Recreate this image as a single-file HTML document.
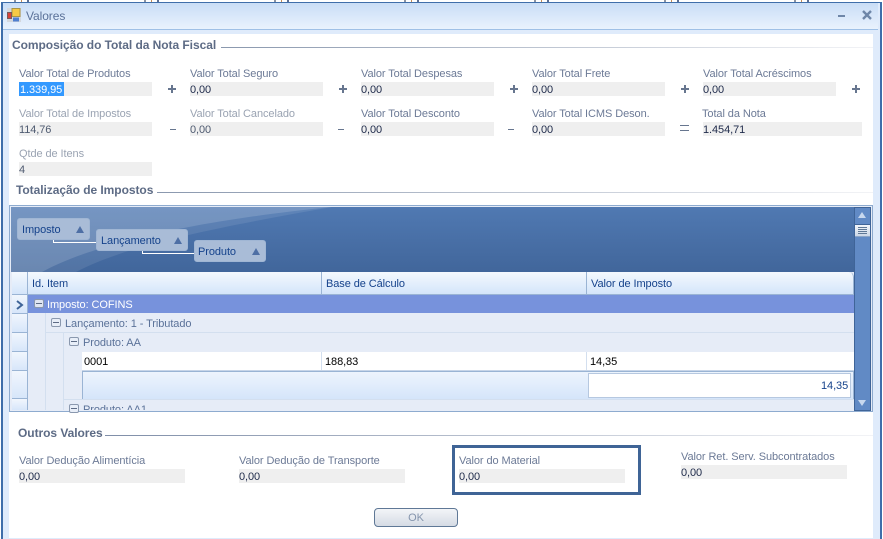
<!DOCTYPE html>
<html><head><meta charset="utf-8"><style>
html,body{margin:0;padding:0}
body{width:883px;height:538px;overflow:hidden;position:relative;background:#fff;font-family:"Liberation Sans",sans-serif;font-size:11px;letter-spacing:-.08px;color:#15428b}
div,span{position:absolute;white-space:nowrap}
.t{line-height:14px;height:14px}
.l{color:#6c7a96;line-height:16px}
.m{color:#9aa3b2;line-height:16px}
.b{background:#efefef;height:14px}
.v{color:#1e2a4a;line-height:16px;height:14px}
.g{font-weight:bold;color:#5d6b85;line-height:14px;height:14px;font-size:12px;letter-spacing:-.05px}
.h{top:272px;height:22px;background:linear-gradient(#f4f9fe,#d4e5fa);border-bottom:1px solid #9ab4d4;border-right:1px solid #9ab4d4;line-height:24px}
.p{color:#5b7299;line-height:14px;height:14px}
.ex{width:8px;height:7px;border:1px solid #8a98ae;background:#e8eef8;border-radius:2px}
.ex:after{content:"";position:absolute;left:1px;right:1px;top:3px;height:1px;background:#5d6b85}
.bt{background:#a9bcd7;border:1px solid #a0b6d4;border-radius:3px;height:20px;line-height:22px;color:#15428b}
.tri{width:0;height:0;border-left:4px solid transparent;border-right:4px solid transparent;border-bottom:7px solid #4e6fa5}
.ind{left:12px;width:15px;background:linear-gradient(#f1f6fd,#d7e6fa);border-bottom:1px solid #9ab4d4;border-right:1px solid #9ab4d4}
.pl,.mi,.eq{background:#67768f}
</style></head><body>

<!-- background strip -->
<div style="left:0;top:0;width:883px;height:2px;background:repeating-linear-gradient(90deg,#fff 0 14px,#8b93a3 14px 16px,#fff 16px 21px,#c28a55 21px 22px,#fff 22px 27px,#5c6d90 27px 29px,#fff 29px 130px)"></div>
<div style="left:881px;top:0;width:2px;height:538px;background:#fff"></div>

<!-- window -->
<div style="left:1px;top:2px;width:877px;height:536px;border:1px solid #3f6eaa;border-bottom:0;border-left-width:2px;border-right-width:2px;background:#dfebfb"></div>
<div style="left:3px;top:3px;width:875px;height:26px;background:linear-gradient(#c9ddf6,#e9f2fd)"></div>
<div style="left:3px;top:29px;width:875px;height:1px;background:#9fc0e6"></div>

<!-- title icon -->
<svg style="position:absolute;left:7px;top:8px" width="14" height="14" viewBox="0 0 14 14">
<rect x="0" y="0" width="14" height="14" fill="#d4d8de"/>
<rect x="5" y="0.5" width="8" height="8" fill="#f6c945" stroke="#a89448"/>
<rect x="0.5" y="4.5" width="4" height="6" fill="#d8423a" stroke="#7a5a5a"/>
<rect x="6" y="9.5" width="6" height="4" fill="#4f7fd0"/>
</svg>
<div class="t" style="left:26px;top:9px;color:#5a7199;font-size:12px">Valores</div>
<div style="left:838px;top:15px;width:7px;height:2px;background:#6e86a8"></div>
<svg style="position:absolute;left:862px;top:10px" width="10" height="10" viewBox="0 0 10 10"><path d="M1 1L9 9M9 1L1 9" stroke="#6e86a8" stroke-width="2.4"/></svg>

<!-- white client -->
<div style="left:9px;top:34px;width:864px;height:504px;background:#fff"></div>

<!-- group 1 -->
<div class="g" style="left:12px;top:38px">Composição do Total da Nota Fiscal</div>
<div style="left:221px;top:47px;width:652px;height:1px;background:linear-gradient(90deg,#8a98ae,#f2f3f6)"></div>

<div class="t l" style="left:19px;top:66px">Valor Total de Produtos</div>
<div class="b" style="left:19px;top:82px;width:133px"></div>
<div style="left:19px;top:82px;width:45px;height:14px;background:#3399ff"></div>
<div class="v" style="left:20px;top:82px;color:#fff">1.339,95</div>
<div class="pl" style="left:168px;top:88px;width:8px;height:1px;box-shadow:0 1px 0 #67768f"></div><div class="pl" style="left:171px;top:85px;width:2px;height:8px"></div>

<div class="t l" style="left:190px;top:66px">Valor Total Seguro</div>
<div class="b" style="left:190px;top:82px;width:133px"></div>
<div class="v" style="left:190px;top:82px">0,00</div>
<div class="pl" style="left:339px;top:88px;width:8px;height:1px;box-shadow:0 1px 0 #67768f"></div><div class="pl" style="left:342px;top:85px;width:2px;height:8px"></div>

<div class="t l" style="left:361px;top:66px">Valor Total Despesas</div>
<div class="b" style="left:361px;top:82px;width:133px"></div>
<div class="v" style="left:361px;top:82px">0,00</div>
<div class="pl" style="left:510px;top:88px;width:8px;height:1px;box-shadow:0 1px 0 #67768f"></div><div class="pl" style="left:513px;top:85px;width:2px;height:8px"></div>

<div class="t l" style="left:532px;top:66px">Valor Total Frete</div>
<div class="b" style="left:532px;top:82px;width:133px"></div>
<div class="v" style="left:532px;top:82px">0,00</div>
<div class="pl" style="left:681px;top:88px;width:8px;height:1px;box-shadow:0 1px 0 #67768f"></div><div class="pl" style="left:684px;top:85px;width:2px;height:8px"></div>

<div class="t l" style="left:703px;top:66px">Valor Total Acréscimos</div>
<div class="b" style="left:703px;top:82px;width:133px"></div>
<div class="v" style="left:703px;top:82px">0,00</div>
<div class="pl" style="left:852px;top:88px;width:8px;height:1px;box-shadow:0 1px 0 #67768f"></div><div class="pl" style="left:855px;top:85px;width:2px;height:8px"></div>

<div class="t m" style="left:19px;top:106px">Valor Total de Impostos</div>
<div class="b" style="left:19px;top:122px;width:133px"></div>
<div class="v" style="left:19px;top:122px;color:#4e5a70">114,76</div>
<div class="mi" style="left:170px;top:129px;width:6px;height:1px"></div>

<div class="t m" style="left:190px;top:106px">Valor Total Cancelado</div>
<div class="b" style="left:190px;top:122px;width:133px"></div>
<div class="v" style="left:190px;top:122px;color:#4e5a70">0,00</div>
<div class="mi" style="left:338px;top:129px;width:6px;height:1px"></div>

<div class="t l" style="left:361px;top:106px">Valor Total Desconto</div>
<div class="b" style="left:361px;top:122px;width:133px"></div>
<div class="v" style="left:361px;top:122px">0,00</div>
<div class="mi" style="left:508px;top:129px;width:6px;height:1px"></div>

<div class="t l" style="left:532px;top:106px">Valor Total ICMS Deson.</div>
<div class="b" style="left:532px;top:122px;width:133px"></div>
<div class="v" style="left:532px;top:122px">0,00</div>
<div class="eq" style="left:680px;top:125px;width:9px;height:1px"></div>
<div class="eq" style="left:680px;top:130px;width:9px;height:1px"></div>

<div class="t l" style="left:702px;top:106px">Total da Nota</div>
<div class="b" style="left:703px;top:122px;width:159px"></div>
<div class="v" style="left:703px;top:122px">1.454,71</div>

<div class="t m" style="left:19px;top:146px">Qtde de Itens</div>
<div class="b" style="left:19px;top:162px;width:133px"></div>
<div class="v" style="left:19px;top:162px;color:#4e5a70">4</div>

<!-- group 2 -->
<div class="g" style="left:16px;top:183px">Totalização de Impostos</div>
<div style="left:157px;top:192px;width:716px;height:1px;background:linear-gradient(90deg,#8a98ae,#f2f3f6)"></div>

<!-- grid -->
<div style="left:9px;top:205px;width:862px;height:205px;border:1px solid #8eabcf;background:#e6ecf7"></div>
<svg style="position:absolute;left:11px;top:207px" width="844" height="65" viewBox="0 0 844 65">
<defs><linearGradient id="a" x1="0" y1="0" x2="0" y2="1"><stop offset="0" stop-color="#5079b2"/><stop offset="1" stop-color="#41669b"/></linearGradient></defs>
<rect width="844" height="65" fill="url(#a)"/>
<path d="M0 0H321C180 14 80 38 31 65H0Z" fill="#fff" opacity=".22"/>
<path d="M31 65C80 38 180 14 321 0C220 18 120 36 65 65Z" fill="#fff" opacity=".09"/>
</svg>

<div class="bt" style="left:17px;top:218px;width:71px"><span style="left:4px;top:0">Imposto</span><div class="tri" style="left:58px;top:7px"></div></div>
<div style="left:53px;top:240px;width:43px;height:2px;border:1px solid #fff;border-top:0;border-right:0"></div>
<div class="bt" style="left:96px;top:229px;width:90px"><span style="left:4px;top:0">Lançamento</span><div class="tri" style="left:77px;top:7px"></div></div>
<div style="left:142px;top:251px;width:52px;height:2px;border:1px solid #fff;border-top:0;border-right:0"></div>
<div class="bt" style="left:194px;top:240px;width:70px"><span style="left:3px;top:0">Produto</span><div class="tri" style="left:57px;top:7px"></div></div>

<!-- header -->
<div class="h" style="left:12px;width:15px"></div>
<div class="h" style="left:28px;width:293px"><span style="left:4px;top:0">Id. Item</span></div>
<div class="h" style="left:322px;width:264px"><span style="left:4px;top:0">Base de Cálculo</span></div>
<div class="h" style="left:587px;width:266px;border-top-right-radius:5px"><span style="left:4px;top:0">Valor de Imposto</span></div>

<!-- left indicator -->
<div class="ind" style="top:295px;height:18px"></div>
<svg style="position:absolute;left:16px;top:300px" width="8" height="10" viewBox="0 0 8 10"><path d="M1 1L6 5L1 9" fill="none" stroke="#3f6498" stroke-width="2"/></svg>
<div class="ind" style="top:314px;height:18px"></div>
<div class="ind" style="top:333px;height:18px"></div>
<div class="ind" style="top:352px;height:18px"></div>
<div class="ind" style="top:371px;height:27px"></div>
<div class="ind" style="top:399px;height:11px;border-bottom:0"></div>

<!-- selected row -->
<div style="left:28px;top:295px;width:826px;height:18px;background:#7792dc"></div>
<div class="ex" style="left:34px;top:299px;background:#dfe5f2"></div>
<div class="t" style="left:47px;top:298px;color:#fff">Imposto: COFINS</div>

<!-- Lancamento -->
<div style="left:45px;top:313px;width:1px;height:97px;background:#d3dfef"></div>
<div style="left:46px;top:332px;width:808px;height:1px;background:#d3dfef"></div>
<div class="ex" style="left:51px;top:318px"></div>
<div class="p" style="left:65px;top:317px">Lançamento: 1 - Tributado</div>

<!-- Produto AA -->
<div style="left:63px;top:333px;width:1px;height:77px;background:#d3dfef"></div>
<div class="ex" style="left:69px;top:337px"></div>
<div class="p" style="left:83px;top:336px">Produto: AA</div>

<!-- data row -->
<div style="left:82px;top:352px;width:772px;height:18px;background:#fff;border-bottom:1px solid #c7d5e8"></div>
<div style="left:321px;top:352px;width:1px;height:18px;background:#d3dfef"></div>
<div style="left:586px;top:352px;width:1px;height:18px;background:#d3dfef"></div>
<div class="t" style="left:84px;top:355px;color:#000">0001</div>
<div class="t" style="left:325px;top:355px;color:#000">188,83</div>
<div class="t" style="left:590px;top:355px;color:#000">14,35</div>

<!-- footer row -->
<div style="left:82px;top:371px;width:770px;height:27px;border:1px solid #9ab4d4;background:linear-gradient(#edf4fd,#d5e5fa)"></div>
<div style="left:588px;top:373px;width:261px;height:23px;border:1px solid #b6c8e0;background:#fff"></div>
<div class="t" style="left:821px;top:379px">14,35</div>

<!-- Produto AA1 -->
<div style="left:63px;top:399px;width:791px;height:1px;background:#d3dfef"></div>
<div class="ex" style="left:69px;top:404px"></div>
<div class="p" style="left:83px;top:403px;height:7px;overflow:hidden;line-height:14px">Produto: AA1</div>

<!-- scrollbar -->
<div style="left:854px;top:207px;width:15px;height:202px;border:1px solid #3f6498;background:#618ac5"></div>
<div style="left:855px;top:224px;width:15px;height:11px;background:linear-gradient(#f1f5fb,#ccd7e6);border-top:1px solid #3f6498;border-bottom:1px solid #8ba5c8"></div>
<div style="left:858px;top:227px;width:9px;height:1px;background:#5f7896;box-shadow:0 2px 0 #5f7896,0 4px 0 #5f7896,0 6px 0 #5f7896"></div>
<div style="left:858px;top:212px;width:0;height:0;border-left:4.5px solid transparent;border-right:4.5px solid transparent;border-bottom:6px solid #c8d8ee"></div>
<div style="left:858px;top:400px;width:0;height:0;border-left:4.5px solid transparent;border-right:4.5px solid transparent;border-top:6px solid #c8d8ee"></div>

<!-- group 3 -->
<div class="g" style="left:18px;top:426px">Outros Valores</div>
<div style="left:105px;top:435px;width:768px;height:1px;background:linear-gradient(90deg,#7f8ea8,#f2f3f6)"></div>

<div class="t l" style="left:19px;top:453px">Valor Dedução Alimentícia</div>
<div class="b" style="left:19px;top:469px;width:166px"></div>
<div class="v" style="left:19px;top:469px">0,00</div>

<div class="t l" style="left:239px;top:453px">Valor Dedução de Transporte</div>
<div class="b" style="left:239px;top:469px;width:166px"></div>
<div class="v" style="left:239px;top:469px">0,00</div>

<div style="left:452px;top:445px;width:183px;height:44px;border:3px solid #3f6496"></div>
<div class="t l" style="left:459px;top:453px">Valor do Material</div>
<div class="b" style="left:459px;top:469px;width:166px"></div>
<div class="v" style="left:459px;top:469px">0,00</div>

<div class="t l" style="left:681px;top:449px">Valor Ret. Serv. Subcontratados</div>
<div class="b" style="left:681px;top:465px;width:166px"></div>
<div class="v" style="left:681px;top:465px">0,00</div>

<div style="left:374px;top:508px;width:82px;height:17px;border:1px solid #5f7896;border-radius:4px;background:linear-gradient(#f3f5f8,#d5dbe4);text-align:center;line-height:18px;color:#8595ad">OK</div>

</body></html>
